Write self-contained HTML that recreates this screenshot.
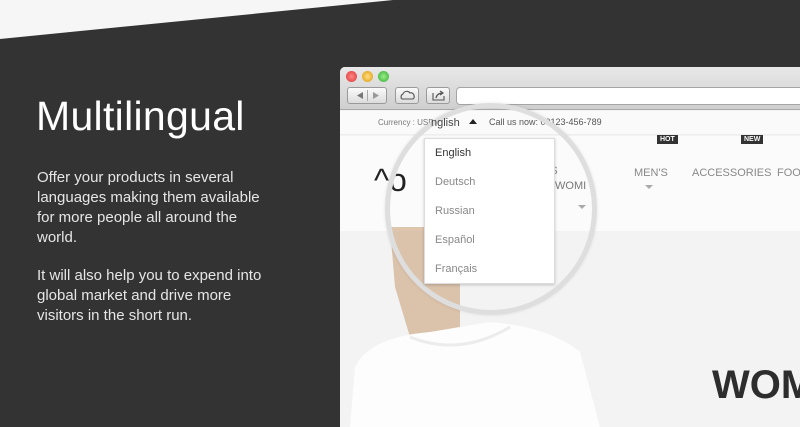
<!DOCTYPE html>
<html><head><meta charset="utf-8"><style>
*{margin:0;padding:0;box-sizing:border-box}
body{width:800px;height:415px;overflow:hidden;background:#333;position:relative;font-family:"Liberation Sans",sans-serif}
.tri{position:absolute;left:0;top:0}
h1{position:absolute;left:36px;top:93px;font-size:41px;font-weight:normal;color:#fff;letter-spacing:0.3px}
.p{position:absolute;left:37px;color:#e6e6e6;font-size:15px;line-height:20px;width:232px}
.win{position:absolute;left:340px;top:67px;width:470px;height:360px;background:#f3f3f3;border-radius:5px 0 0 0;overflow:hidden}
.chrome{position:absolute;left:0;top:0;width:100%;height:43px;background:linear-gradient(#e8e8e8,#cfcfcf);border-bottom:1px solid #a9a9a9}
.dot{position:absolute;top:4px;width:11px;height:11px;border-radius:50%}
.btn{position:absolute;top:20px;height:17px;border:1px solid #9a9a9a;border-radius:3px;background:linear-gradient(#fafafa,#dcdcdc)}
.url{position:absolute;left:116px;top:20px;width:400px;height:18px;border:1px solid #a5a5a5;border-radius:4px;background:#fff}
.top{position:absolute;left:0;top:44px;width:100%;height:24px;background:#fafafa;border-bottom:1px solid #eee;font-size:8px;color:#777}
.hdr{position:absolute;left:0;top:69px;width:100%;height:95px;background:#fbfbfb}
.nav{position:absolute;font-size:11px;color:#888}
.tag{position:absolute;background:#333;color:#fff;font-size:7px;padding:1px 3px;font-weight:bold}
.wom{position:absolute;left:372px;top:296px;font-size:40px;font-weight:bold;color:#2d2d2d}
.mag{position:absolute;left:385px;top:103px;width:212px;height:212px;border-radius:50%;border:5px solid #dedede;box-shadow:0 0 3px rgba(0,0,0,.1)}
.dd{position:absolute;left:424px;top:138px;width:131px;height:146px;background:#fff;border:1px solid #ddd;box-shadow:0 1px 3px rgba(0,0,0,.2);font-size:11px;color:#888}
.dd div{position:absolute;left:10px}
</style></head><body>
<svg class="tri" width="400" height="42"><polygon points="0,0 393,0 0,39" fill="#f6f6f6"/></svg>
<h1>Multilingual</h1>
<div class="p" style="top:168px">Offer your products in several languages making them available for more people all around the world.</div>
<div class="p" style="top:266px">It will also help you to expend into global market and drive more visitors in the short run.</div>

<div class="win">
 <div class="chrome">
  <div class="dot" style="left:6px;background:radial-gradient(#f88,#d33)"></div>
  <div class="dot" style="left:22px;background:radial-gradient(#fd8,#d90)"></div>
  <div class="dot" style="left:38px;background:radial-gradient(#9e8,#3a3)"></div>
  <div class="btn" style="left:7px;width:40px"><svg width="40" height="15"><polygon points="9,7.5 15,4 15,11" fill="#777"/><line x1="19.5" y1="2" x2="19.5" y2="13" stroke="#aaa"/><polygon points="31,7.5 25,4 25,11" fill="#999"/></svg></div>
  <div class="btn" style="left:55px;width:24px"><svg width="24" height="15"><path d="M6 11 a3 3 0 0 1 1-5 a4 4 0 0 1 7-1 a3 3 0 0 1 4 3 a2.5 2.5 0 0 1 -1 3z" fill="none" stroke="#555" stroke-width="1.1"/></svg></div>
  <div class="btn" style="left:86px;width:24px"><svg width="24" height="15"><path d="M6 5v7h11v-4" fill="none" stroke="#555" stroke-width="1.1"/><path d="M9 10 q1-5 7-5 M13 3 l3 2 -3 2" fill="none" stroke="#555" stroke-width="1.2"/></svg></div>
  <div class="url"></div>
 </div>
 <div class="top"><span style="position:absolute;left:38px;top:7px">Currency : USD</span><span style="position:absolute;left:149px;top:6px;font-size:9px;color:#555">Call us now: 00123-456-789</span></div>
 <div class="hdr">
  <div style="position:absolute;left:34px;top:26px;font-size:32px;color:#222">^o</div>
  <div class="nav" style="left:294px;top:31px">MEN'S</div>
  <div class="nav" style="left:352px;top:31px">ACCESSORIES</div>
  <div class="nav" style="left:437px;top:31px">FOO</div>
  <div class="tag" style="left:317px;top:-1px">HOT</div>
  <div class="tag" style="left:401px;top:-1px">NEW</div>
  <svg style="position:absolute;left:305px;top:49px" width="8" height="5"><polygon points="0,0 8,0 4,4" fill="#aaa"/></svg>
 </div>
 <svg style="position:absolute;left:10px;top:160px" width="300" height="200">
  <path d="M40 0 L110 0 L110 100 L60 110 L45 60z" fill="#c9a27b" opacity=".6"/>
  <path d="M0 200 L5 140 Q20 110 80 105 L140 95 Q200 100 230 125 L250 200z" fill="#fdfdfd"/>
  <path d="M60 110 Q110 130 160 100" fill="none" stroke="#ececec" stroke-width="3"/>
 </svg>
 <div class="wom">WOM</div>
</div>

<div class="mag"></div>
<div style="position:absolute;left:431px;top:117px;font-size:11px;color:#444">nglish</div>
<svg style="position:absolute;left:469px;top:119px" width="8" height="5"><polygon points="4,0 8,5 0,5" fill="#222"/></svg>
<div style="position:absolute;left:533px;top:165px;font-size:11px;color:#888">EN'S</div>
<div style="position:absolute;left:555px;top:180px;font-size:11px;color:#777">WOMI</div>
<svg style="position:absolute;left:578px;top:205px" width="8" height="5"><polygon points="0,0 8,0 4,4" fill="#aaa"/></svg>
<div class="dd">
 <div style="top:8px;color:#333">English</div>
 <div style="top:37px">Deutsch</div>
 <div style="top:66px">Russian</div>
 <div style="top:95px">Español</div>
 <div style="top:124px">Français</div>
</div>
</body></html>
